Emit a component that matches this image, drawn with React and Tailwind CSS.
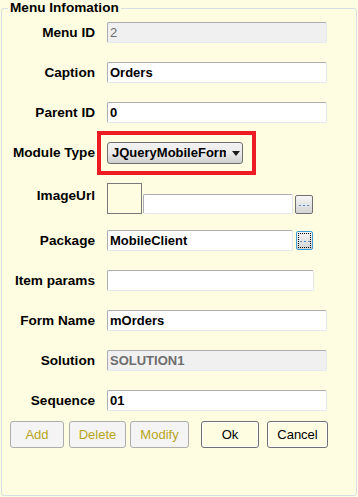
import React from "react";

function Field({ value = "", disabled = false, className = "" }) {
  return (
    <div
      className={`h-[21px] rounded-[2px] border border-t-[#abadb3] border-l-[#abadb3] border-r-[#e3e9ef] border-b-[#e3e9ef] px-[2px] flex items-center font-bold text-[13px] leading-none overflow-hidden whitespace-nowrap ${
        disabled ? "bg-[#f0f0f0] text-[#6d6d6d] border-r-[#abadb3] border-b-[#abadb3]" : "bg-white text-black"
      } ${className}`}
    >
      {value}
    </div>
  );
}

function Row({ label, children, className = "" }) {
  return (
    <div className={`flex items-center ${className}`}>
      <div className="w-[93px] shrink-0 text-right font-bold text-[13.6px] leading-4 text-black">{label}</div>
      <div className="ml-[12px] flex items-center">{children}</div>
    </div>
  );
}

function DotsButton({ focused = false, className = "" }) {
  return (
    <div
      className={`h-[19px] rounded-[2px] flex items-center justify-center bg-gradient-to-b from-[#f6f6f6] to-[#d4d4d4] ${
        focused ? "border border-[#3c9fd8] outline outline-1 outline-dotted outline-black -outline-offset-3" : "border border-[#707070]"
      } ${className}`}
    >
      <span className="flex gap-[2px] mt-[1px]">
        <span className="w-[2px] h-[1px] bg-[#6a8fb0]" />
        <span className="w-[2px] h-[1px] bg-[#3a8fd8]" />
        <span className="w-[2px] h-[1px] bg-[#6a8fb0]" />
      </span>
    </div>
  );
}

function Btn({ children, disabled = false, className = "" }) {
  return (
    <div
      className={`h-[27px] rounded-[3px] flex items-center justify-center text-[13px] ${
        disabled
          ? "border border-[#adadad] bg-[#f4f4f4] text-[#b8a520]"
          : "border border-[#707070] bg-[#fffde1] text-black shadow-[inset_0_0_0_1px_#ffffff]"
      } ${className}`}
    >
      {children}
    </div>
  );
}

export default function App() {
  return (
    <div className="w-[358px] h-[497px] bg-[#fffde1] font-['Liberation_Sans',Arial,sans-serif] overflow-hidden">
      <fieldset className="ml-[1px] w-[356px] h-[496px] border border-[#d5dfe5] rounded-[3px]">
        <legend className="ml-[6px] px-[2px] font-bold text-[13.6px] leading-4 text-black">Menu Infomation</legend>

        <Row label="Menu ID" className="mt-[6px]">
          <Field value="2" disabled className="w-[220px] font-normal" />
        </Row>
        <Row label="Caption" className="mt-[19px]">
          <Field value="Orders" className="w-[220px]" />
        </Row>
        <Row label="Parent ID" className="mt-[19px]">
          <Field value="0" className="w-[220px]" />
        </Row>

        <div className="flex items-center mt-[8px]">
          <div className="w-[93px] shrink-0 text-right font-bold text-[13.6px] leading-4 text-black">Module Type</div>
          <div className="ml-[2px] w-[159px] h-[44px] border-4 border-[#ed1c24] pl-[6px] pt-[7px]">
            <div className="w-[136px] h-[22px] rounded-[3px] border border-[#707070] bg-gradient-to-b from-[#f2f2f2] via-[#ebebeb] to-[#cfcfcf] flex items-center pl-[4px]">
              <span className="w-[114px] overflow-hidden whitespace-nowrap font-bold text-[13px] leading-4 text-black">JQueryMobileForm</span>
              <svg width="8" height="5" viewBox="0 0 8 5" className="ml-[6px]">
                <path d="M0 0h8L4 5z" fill="#1b1b1b" />
              </svg>
            </div>
          </div>
        </div>

        <div className="flex items-start mt-[8px]">
          <div className="w-[93px] shrink-0 text-right font-bold text-[13.6px] leading-4 text-black pt-[5px]">ImageUrl</div>
          <div className="ml-[12px] w-[35px] h-[31px] border border-[#7a7a7a] bg-[#fffde1]" />
          <Field className="ml-[1px] mt-[11px] w-[150px] !h-[20px]" />
          <DotsButton className="ml-[2px] mt-[12px] w-[18px]" />
        </div>

        <Row label="Package" className="mt-[16px]">
          <Field value="MobileClient" className="w-[186px]" />
          <DotsButton focused className="ml-[3px] w-[17px]" />
        </Row>
        <Row label="Item params" className="mt-[19px]">
          <Field className="w-[207px]" />
        </Row>
        <Row label="Form Name" className="mt-[19px]">
          <Field value="mOrders" className="w-[220px]" />
        </Row>
        <Row label="Solution" className="mt-[19px]">
          <Field value="SOLUTION1" disabled className="w-[220px]" />
        </Row>
        <Row label="Sequence" className="mt-[19px]">
          <Field value="01" className="w-[220px]" />
        </Row>

        <div className="flex mt-[10px] ml-[8px]">
          <Btn disabled className="w-[54px]">Add</Btn>
          <Btn disabled className="ml-[5px] w-[57px]">Delete</Btn>
          <Btn disabled className="ml-[4px] w-[59px]">Modify</Btn>
          <Btn className="ml-[12px] w-[58px]">Ok</Btn>
          <Btn className="ml-[8px] w-[61px]">Cancel</Btn>
        </div>
      </fieldset>
    </div>
  );
}
